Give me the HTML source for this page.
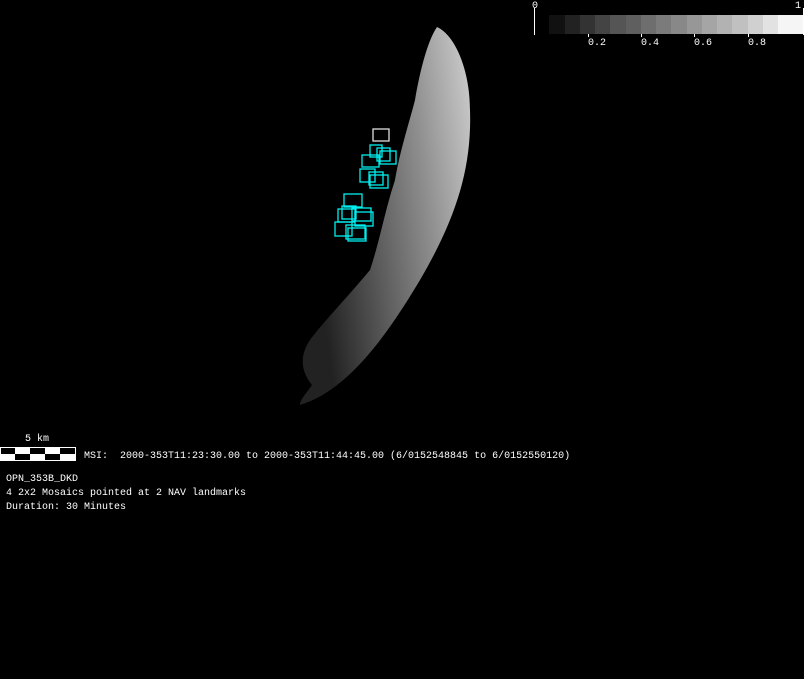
<!DOCTYPE html>
<html><head><style>
body{margin:0;background:#000;width:804px;height:679px;overflow:hidden;position:relative;font-family:"Liberation Mono","DejaVu Sans Mono",monospace;color:#fff}
.t{position:absolute;font-size:10px;line-height:14px;white-space:pre}
</style></head><body>
<svg width="804" height="679" style="position:absolute;left:0;top:0">
<defs>
<linearGradient id="g" x1="1" y1="0" x2="0" y2="0.3">
<stop offset="0" stop-color="#d0d0d0"/><stop offset="0.35" stop-color="#909090"/><stop offset="0.7" stop-color="#555"/><stop offset="1" stop-color="#222"/>
</linearGradient>
</defs>
<path d="M437,27 C455,35 470,70 470,110 C472,170 455,220 420,280 C390,330 350,390 300,405 C300,400 305,395 312,385 C300,370 300,355 310,340 C325,320 345,300 370,270 C380,240 385,210 395,180 C400,150 410,120 415,100 C420,70 428,40 437,27Z" fill="url(#g)"/>
<g fill="none" stroke="#00f0f0" stroke-width="1.3">
<rect x="373" y="129" width="16" height="12" stroke="#ddd"/>
<rect x="370" y="145" width="12" height="12"/>
<rect x="377" y="148" width="13" height="13"/>
<rect x="380" y="151" width="16" height="13"/>
<rect x="362" y="155" width="17" height="12"/>
<rect x="360" y="169" width="15" height="13"/>
<rect x="369" y="172" width="14" height="13"/>
<rect x="370" y="175" width="18" height="13"/>
<rect x="344" y="194" width="18" height="13"/>
<rect x="338" y="209" width="17" height="13"/>
<rect x="342" y="206" width="14" height="13"/>
<rect x="352" y="208" width="19" height="13"/>
<rect x="355" y="212" width="18" height="14"/>
<rect x="335" y="222" width="17" height="14"/>
<rect x="346" y="225" width="19" height="14"/>
<rect x="348" y="228" width="18" height="13"/>
</g>
<line x1="534.5" y1="8" x2="534.5" y2="35" stroke="#fff"/>
<g>
<rect x="549" y="15" width="16" height="19" fill="#111"/><rect x="565" y="15" width="15" height="19" fill="#222"/><rect x="580" y="15" width="15" height="19" fill="#333"/><rect x="595" y="15" width="15" height="19" fill="#444"/><rect x="610" y="15" width="16" height="19" fill="#555"/><rect x="626" y="15" width="15" height="19" fill="#5f5f5f"/><rect x="641" y="15" width="15" height="19" fill="#6e6e6e"/><rect x="656" y="15" width="15" height="19" fill="#7b7b7b"/><rect x="671" y="15" width="16" height="19" fill="#888"/><rect x="687" y="15" width="15" height="19" fill="#979797"/><rect x="702" y="15" width="15" height="19" fill="#a5a5a5"/><rect x="717" y="15" width="15" height="19" fill="#b2b2b2"/><rect x="732" y="15" width="16" height="19" fill="#c0c0c0"/><rect x="748" y="15" width="15" height="19" fill="#d0d0d0"/><rect x="763" y="15" width="15" height="19" fill="#e2e2e2"/><rect x="778" y="15" width="25" height="19" fill="#f5f5f5"/>
</g>
<g stroke="#fff"><line x1="588.5" y1="34" x2="588.5" y2="37"/><line x1="641.5" y1="34" x2="641.5" y2="37"/><line x1="694.5" y1="34" x2="694.5" y2="37"/><line x1="748.5" y1="34" x2="748.5" y2="37"/><line x1="803.5" y1="8" x2="803.5" y2="35"/></g>
<rect x="0" y="447" width="76" height="14" fill="#fff"/>
<g fill="#000"><rect x="1" y="448" width="14" height="6"/><rect x="15" y="454" width="15" height="6"/><rect x="30" y="448" width="15" height="6"/><rect x="45" y="454" width="15" height="6"/><rect x="60" y="448" width="15" height="6"/></g>
</svg>
<div class="t" style="left:532px;top:0px">0</div>
<div class="t" style="left:795px;top:0px">1</div>
<div class="t" style="left:588px;top:37px">0.2</div>
<div class="t" style="left:641px;top:37px">0.4</div>
<div class="t" style="left:694px;top:37px">0.6</div>
<div class="t" style="left:748px;top:37px">0.8</div>
<div class="t" style="left:25px;top:433px">5 km</div>
<div class="t" style="left:84px;top:450px">MSI:  2000-353T11:23:30.00 to 2000-353T11:44:45.00 (6/0152548845 to 6/0152550120)</div>
<div class="t" style="left:6px;top:473px">OPN_353B_DKD
4 2x2 Mosaics pointed at 2 NAV landmarks
Duration: 30 Minutes</div>
</body></html>
